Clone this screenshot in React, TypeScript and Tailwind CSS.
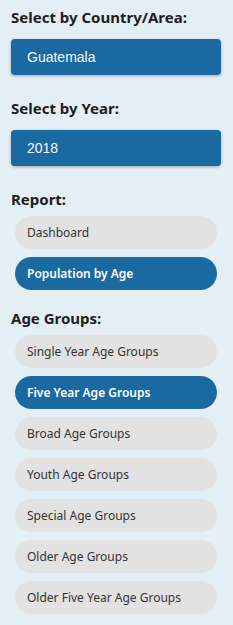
import React from "react";

const reports = [
  { label: "Dashboard", active: false },
  { label: "Population by Age", active: true },
];
const groups = [
  { label: "Single Year Age Groups", active: false },
  { label: "Five Year Age Groups", active: true },
  { label: "Broad Age Groups", active: false },
  { label: "Youth Age Groups", active: false },
  { label: "Special Age Groups", active: false },
  { label: "Older Age Groups", active: false },
  { label: "Older Five Year Age Groups", active: false },
];

function Pill({ label, active }: { label: string; active: boolean }) {
  return (
    <div
      className={
        "h-[33px] w-[202px] ml-[4px] rounded-full flex items-center pl-[12px] text-[12px] " +
        (active ? "bg-[#1a69a0] text-white font-semibold" : "bg-[#e2e2e2] text-[#333]")
      }
    >
      {label}
    </div>
  );
}

function Select({ value }: { value: string }) {
  return (
    <div className="h-[36px] w-[210px] rounded-[4px] bg-[#1a69a0] shadow-[0_1px_3px_rgba(0,0,0,0.3)] flex items-center pl-[16px] text-[14px] text-[#f4f8fb] font-['Liberation_Sans',Arial,sans-serif]">
      {value}
    </div>
  );
}

export default function App() {
  return (
    <div className="w-[233px] h-[625px] bg-[#e4eef5] font-['Noto_Sans',sans-serif] text-[#1e1e1e] pl-[11px] pt-[7px]">
      <div className="text-[15px] font-bold leading-[20px]">Select by Country/Area:</div>
      <div className="mt-[12px]">
        <Select value="Guatemala" />
      </div>
      <div className="mt-[23px] text-[15px] font-bold leading-[20px]">Select by Year:</div>
      <div className="mt-[12px]">
        <Select value="2018" />
      </div>
      <div className="mt-[23px] text-[15px] font-bold leading-[20px]">Report:</div>
      <div className="mt-[7px] flex flex-col gap-[8px]">
        {reports.map((r) => (
          <Pill key={r.label} {...r} />
        ))}
      </div>
      <div className="mt-[18px] text-[15px] font-bold leading-[20px]">Age Groups:</div>
      <div className="mt-[7px] flex flex-col gap-[8px]">
        {groups.map((r) => (
          <Pill key={r.label} {...r} />
        ))}
      </div>
    </div>
  );
}
